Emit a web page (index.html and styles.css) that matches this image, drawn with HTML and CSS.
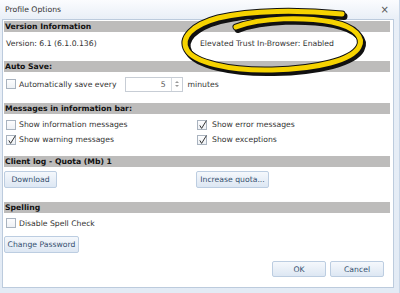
FILE: index.html
```html
<!DOCTYPE html>
<html>
<head>
<meta charset="utf-8">
<link rel="stylesheet" href="styles.css">
</head>
<body>
<div class="dialog">
  <div class="titlebar">
    <span class="title">Profile Options</span>
    <span class="close">×</span>
  </div>
  <div class="content">
    <div class="bar">Version Information</div>
    <div class="grid version">
      <span class="ver-left">Version: 6.1 (6.1.0.136)</span>
      <span class="ver-right">Elevated Trust In-Browser: Enabled</span>
    </div>

    <div class="bar">Auto Save:</div>
    <div class="autosave">
      <label class="check"><span class="box"></span>Automatically save every</label>
      <span class="spinner">
        <span class="val">5</span>
        <span class="arrows">
          <span class="up"></span>
          <span class="down"></span>
        </span>
      </span>
      <span class="unit">minutes</span>
    </div>

    <div class="bar">Messages in information bar:</div>
    <div class="grid messages">
      <label class="check"><span class="box"></span>Show information messages</label>
      <label class="check right"><span class="box checked"><svg viewBox="0 0 10 10"><path d="M1.8 5.4 L3.6 8.4 L8.4 0.6"/></svg></span>Show error messages</label>
      <label class="check"><span class="box checked"><svg viewBox="0 0 10 10"><path d="M1.8 5.4 L3.6 8.4 L8.4 0.6"/></svg></span>Show warning messages</label>
      <label class="check right"><span class="box checked"><svg viewBox="0 0 10 10"><path d="M1.8 5.4 L3.6 8.4 L8.4 0.6"/></svg></span>Show exceptions</label>
    </div>

    <div class="bar">Client log - Quota (Mb) 1</div>
    <div class="grid buttons">
      <span><button class="btn btn-download">Download</button></span>
      <span><button class="btn btn-quota">Increase quota...</button></span>
    </div>

    <div class="bar">Spelling</div>
    <div class="spell">
      <label class="check"><span class="box"></span>Disable Spell Check</label>
    </div>
    <div class="pwd">
      <button class="btn btn-pwd">Change Password</button>
    </div>
    <div class="footer">
      <button class="btn btn-ok">OK</button>
      <button class="btn btn-cancel">Cancel</button>
    </div>
  </div>

  <svg class="highlight" viewBox="0 0 400 293" width="400" height="293">
    <g fill="none" stroke-linecap="round" stroke-linejoin="round">
      <path class="hl-shadow" d="M236 27 C262 17, 305 17, 332 22 C356 27, 364 38, 359 47 C352 60, 318 69, 272 70 C228 71, 194 62, 187 50 C180 38, 192 25, 218 18 C252 10, 300 10, 342 14"/>
      <path class="hl-outline" d="M236 27 C262 17, 305 17, 332 22 C356 27, 364 38, 359 47 C352 60, 318 69, 272 70 C228 71, 194 62, 187 50 C180 38, 192 25, 218 18 C252 10, 300 10, 342 14"/>
      <path class="hl-fill" d="M236 27 C262 17, 305 17, 332 22 C356 27, 364 38, 359 47 C352 60, 318 69, 272 70 C228 71, 194 62, 187 50 C180 38, 192 25, 218 18 C252 10, 300 10, 342 14"/>
    </g>
  </svg>
</div>
</body>
</html>
```
FILE: styles.css
```css
html, body {
  margin: 0;
  padding: 0;
}
body {
  width: 400px;
  height: 293px;
  overflow: hidden;
  font-family: "DejaVu Sans", Verdana, sans-serif;
  font-size: 7.7px;
  color: #333;
}
.dialog {
  position: relative;
  width: 400px;
  height: 293px;
  background: linear-gradient(#fbfcfe 0px, #e9eff7 19px, #e3ebf5 293px);
  border-right: 1px solid #c9d7e8;
  box-sizing: border-box;
}
.titlebar {
  height: 19px;
  display: flex;
  align-items: center;
  justify-content: space-between;
  padding: 0 10px 0 5px;
}
.title {
  color: #333;
}
.close {
  font-size: 10px;
  color: #555;
  line-height: 10px;
}
.content {
  margin-left: 2px;
  width: 392px;
  height: 269px;
  box-sizing: border-box;
  border: 1px solid #bccbdd;
  background: #fff;
  padding: 1px 3px 0 1px;
}
.bar {
  height: 11px;
  line-height: 12px;
  background: #bdbcbb;
  font-weight: bold;
  color: #111;
  padding-left: 1px;
  white-space: nowrap;
}
.grid {
  display: grid;
  grid-template-columns: 193px 1fr;
  align-items: center;
}
.version {
  height: 22px;
  margin-bottom: 7px;
}
.ver-left {
  padding-left: 2px;
}
.ver-right {
  padding-left: 3px;
}
.check {
  display: flex;
  align-items: center;
  white-space: nowrap;
}
.box {
  width: 10px;
  height: 10px;
  box-sizing: border-box;
  border: 1px solid #a9b3bf;
  background: linear-gradient(#fdfdfe, #eef1f5);
  margin: 0 3px 0 2px;
  position: relative;
  flex: none;
}
.check.right .box {
  margin-left: 0;
  margin-right: 5px;
}
.box svg {
  position: absolute;
  left: 0;
  top: -1px;
  width: 10px;
  height: 10px;
}
.box svg path {
  fill: none;
  stroke: #333;
  stroke-width: 1;
}
.autosave {
  height: 24px;
  margin-bottom: 7px;
  display: flex;
  align-items: center;
}
.spinner {
  margin-left: 8px;
  width: 58px;
  height: 15px;
  box-sizing: border-box;
  border: 1px solid #c7cdd5;
  display: flex;
  background: #fff;
}
.val {
  flex: 1;
  text-align: right;
  padding-right: 5px;
  line-height: 13px;
  color: #555;
}
.arrows {
  width: 10px;
  border-left: 1px solid #d6dbe1;
  display: flex;
  flex-direction: column;
  justify-content: space-around;
  align-items: center;
  padding: 2px 0;
}
.up, .down {
  width: 0;
  height: 0;
  border-left: 2px solid transparent;
  border-right: 2px solid transparent;
}
.up {
  border-bottom: 2px solid #999;
}
.down {
  border-top: 2px solid #999;
}
.unit {
  margin-left: 5px;
}
.messages {
  padding-top: 3px;
  grid-auto-rows: 15px;
  margin-bottom: 9px;
}
.buttons {
  padding-top: 4px;
  align-items: start;
  margin-bottom: 14px;
}
.btn {
  font-family: "DejaVu Sans", Verdana, sans-serif;
  font-size: 7.7px;
  color: #34506f;
  height: 17px;
  padding: 0;
  border: 1px solid #bccde1;
  border-radius: 2px;
  background: linear-gradient(#f5f8fc, #dde7f3);
  box-sizing: border-box;
  white-space: nowrap;
  display: block;
}
.btn-download {
  width: 53px;
}
.btn-quota {
  width: 73px;
  margin-left: -1px;
}
.spell {
  padding-top: 2px;
  height: 16px;
  display: flex;
  align-items: center;
}
.pwd {
  margin-top: 5px;
}
.btn-pwd {
  width: 75px;
}
.footer {
  margin-top: 8px;
  display: flex;
  justify-content: flex-end;
  gap: 4px;
  padding-right: 6px;
}
.btn-ok, .btn-cancel {
  width: 54px;
  height: 16px;
}
.highlight {
  position: absolute;
  left: 0;
  top: 0;
  pointer-events: none;
}
.hl-shadow {
  stroke: #111;
  stroke-width: 7;
  transform: translate(2px, 2.5px);
}
.hl-outline {
  stroke: #111;
  stroke-width: 7;
}
.hl-fill {
  stroke: #f6d300;
  stroke-width: 5;
}
```
